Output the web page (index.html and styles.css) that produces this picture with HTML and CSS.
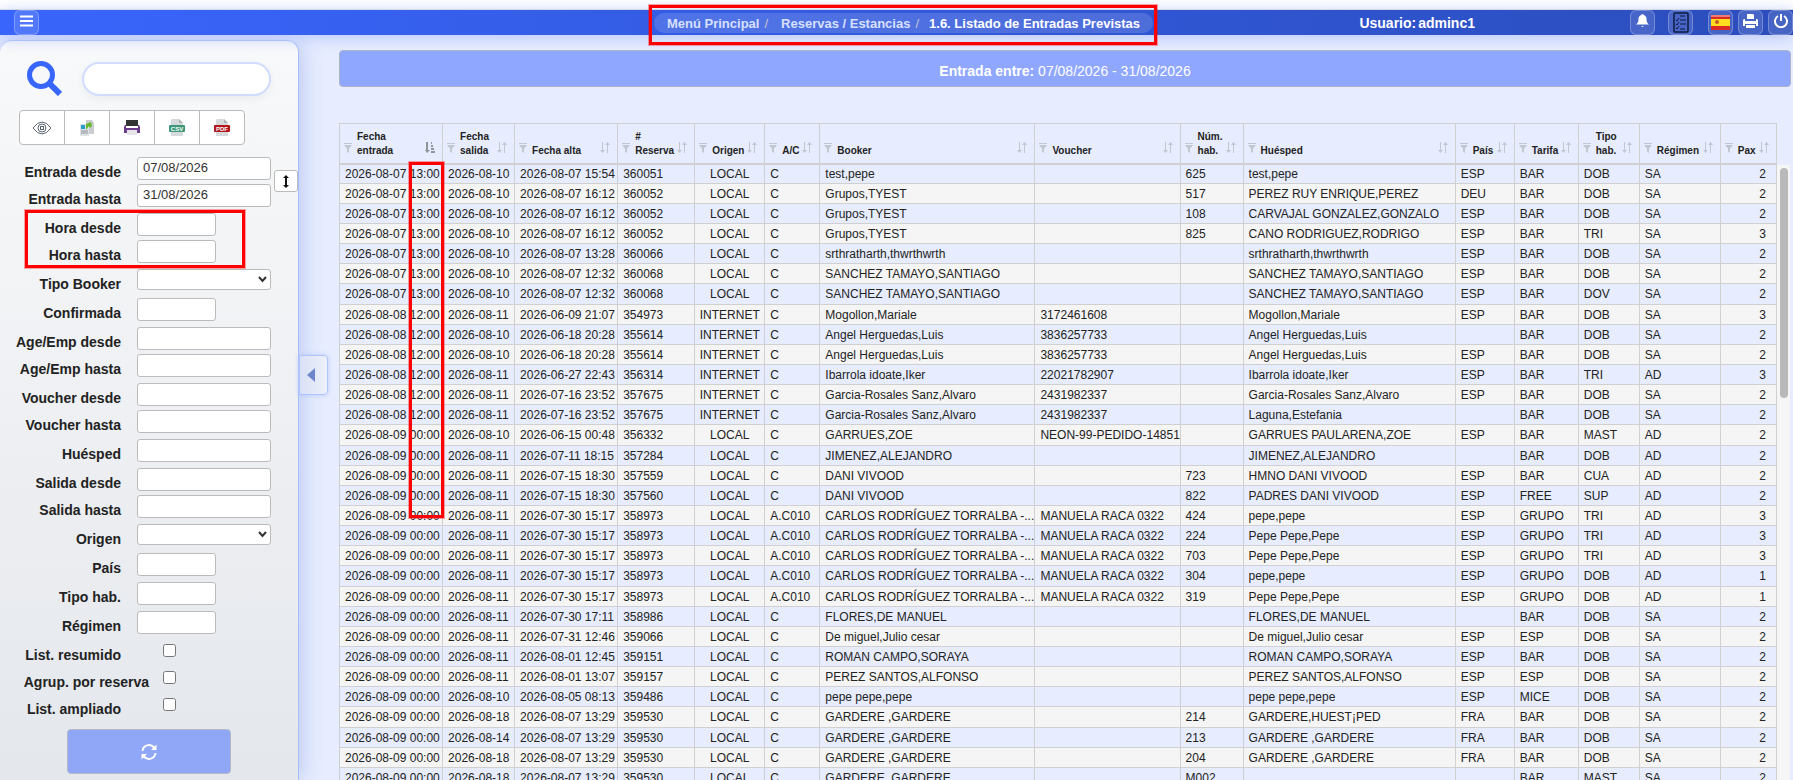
FILE: index.html
```html
<!DOCTYPE html>
<html lang="es">
<head>
    <meta charset="UTF-8">
    <meta name="viewport" content="width=device-width, initial-scale=1.0">
    <title>Listado de Entradas Previstas</title>
    <link rel="stylesheet" href="styles.css">
</head>
<body>
    <!-- Icon shapes shared by the table header -->
    <svg class="hidden">
        <symbol id="filter" viewBox="0 0 8 10"><path d="M0 0h8v1H0zM0 2h8L5 5.500V10L3 8.500v-3z"/></symbol>
        <symbol id="sort" viewBox="0 0 10 11"><path d="M2 0h1v8h2L2.500 11 0 8h2zM7 11h1V3h2L7.500 0 5 3h2z"/></symbol>
        <symbol id="sorted" viewBox="0 0 10 11"><path d="M1 0h2v8h2L2 11 0 8h1zM6 0h1v2H6zM6 3h2v2H6zM6 6h3v2H6zM6 9h4v2H6z"/></symbol>
    </svg>

    <!-- Top bar -->
    <header class="topbar">
        <div>
            <button class="top-button" aria-label="Menú">
                <svg width="13" height="13" viewBox="0 0 13 13"><path d="M0 1.500h13M0 6h13M0 10.500h13" stroke="#fff" stroke-width="2"/></svg>
            </button>
        </div>
        <nav class="breadcrumb">
            <a href="#">Menú Principal</a><span class="slash">/</span>
            <a href="#">Reservas / Estancias</a><span class="slash">/</span>
            <strong>1.6. Listado de Entradas Previstas</strong>
            <span class="mark mark-title"></span>
        </nav>
        <div class="top-right">
            <div class="user"><span>Usuario:</span><span>adminc1</span></div>
            <button class="top-button" aria-label="Avisos">
                <svg width="13" height="14" viewBox="0 0 13 14" fill="#fff"><path d="M5.500 1a1 1 0 0 1 2 0c2 .5 3 2 3 4 0 3 .8 4 2.500 5.500H0C1.700 9 2.500 8 2.500 5c0-2 1-3.500 3-4zM5.500 12h2a1 1 0 0 1-2 0z"/></svg>
            </button>
            <button class="top-button tasks-button" aria-label="Tareas">
                <svg width="16" height="21" viewBox="0 0 16 21" fill="none" stroke="#0f1c3c"><rect x="1" y="1" width="14" height="19" rx="1" stroke-width="1.500"/><path d="M7 4h5M3 8l1 1 2-3M7 8h6M3 12l1 1 2-3M7 12h6M3 16l1 1 2-3M7 17h5"/></svg>
            </button>
            <button class="top-button flag-button" aria-label="Idioma">
                <svg width="19" height="15" viewBox="0 0 19 15"><path fill="#d92b25" d="M0 0h19v15H0z"/><path fill="#ffde20" d="M0 4h19v7H0z"/><path fill="#ef7a70" d="M0 0h19v2H0z"/><circle cx="6" cy="7" r="2" fill="#c35b25"/></svg>
            </button>
            <button class="top-button" aria-label="Imprimir">
                <svg width="15" height="14" viewBox="0 0 15 14" fill="#fff"><path d="M4 0h6l1 1v4H4zM1 5h1v2h11V5h1l1 1v6h-2v-2H2v2H0V6zM3 11h9v3H3z"/></svg>
            </button>
            <button class="top-button" aria-label="Salir">
                <svg width="14" height="14" viewBox="0 0 14 14" fill="none" stroke="#fff" stroke-width="2"><path d="M4 2a6 6 0 1 0 6 0M7 0v7"/></svg>
            </button>
        </div>
    </header>

    <div class="page">
        <!-- Filters -->
        <aside class="sidebar">
            <div class="search">
                <svg width="35" height="35" viewBox="0 0 35 35" fill="none" stroke="#3866fa"><circle cx="14" cy="14" r="11.500" stroke-width="5"/><path d="M22 22l11 11" stroke-width="6"/></svg>
                <input type="text" class="search-input" aria-label="Buscar">
            </div>

            <div class="tools">
                <button aria-label="Ver">
                    <svg width="20" height="14" viewBox="0 0 20 14" fill="none" stroke="#5b6470"><path d="M1 7q9-12 18 0-9 12-18 0z"/><circle cx="10" cy="7" r="4"/><rect x="8.500" y="5.500" width="3" height="3"/></svg>
                </button>
                <button aria-label="Copiar">
                    <svg width="16" height="18" viewBox="0 0 16 18"><path fill="#c9ccd0" d="M7 1h6l2 3v11H7z"/><path fill="#dfe2e5" d="M1 5h9v12H1z"/><path fill="#2b9dc9" d="M2 6h4v4H2z"/><path fill="#69b82e" d="M7 5l5-2 1 4-2 2-1-2-3 4z"/><path stroke="#8d949b" d="M2 12h7M2 14h7"/></svg>
                </button>
                <button aria-label="Imprimir">
                    <svg width="18" height="17" viewBox="0 0 18 17"><path fill="#333" d="M3 1h12v6H3z"/><path fill="#6d3c8c" d="M2 6h1v3h12V6h1l1 2v6H1V8z"/><path fill="#e5e5ea" d="M4 11h10v5H4z"/></svg>
                </button>
                <button aria-label="CSV">
                    <svg width="18" height="18" viewBox="0 0 18 18"><path fill="#d7dadc" d="M4 0h7l4 4v13H3V1z"/><path fill="#aeb3b6" d="M11 0l4 4h-4z"/><rect x="1" y="6" width="16" height="7" rx="1" fill="#3d9877"/><text x="9" y="12" class="file-type">CSV</text></svg>
                </button>
                <button aria-label="PDF">
                    <svg width="18" height="18" viewBox="0 0 18 18"><path fill="#d7dadc" d="M4 0h7l4 4v13H3V1z"/><path fill="#aeb3b6" d="M11 0l4 4h-4z"/><rect x="1" y="6" width="16" height="7" rx="1" fill="#b0161a"/><text x="9" y="12" class="file-type">PDF</text></svg>
                </button>
            </div>

            <form class="filters">
                <div class="group">
                    <div class="field"><label for="entradaDesde">Entrada desde</label><input type="text" id="entradaDesde" value="07/08/2026"></div>
                    <div class="field"><label for="entradaHasta">Entrada hasta</label><input type="text" id="entradaHasta" value="31/08/2026"></div>
                    <button type="button" class="swap" aria-label="Igualar fechas">
                        <svg width="6" height="13" viewBox="0 0 6 13"><path fill="#111" d="M3 0l3 3H4v7h2l-3 3-3-3h2V3H0z"/></svg>
                    </button>
                </div>
                <div class="group">
                    <div class="field"><label for="horaDesde">Hora desde</label><input type="text" id="horaDesde" class="short"></div>
                    <div class="field"><label for="horaHasta">Hora hasta</label><input type="text" id="horaHasta" class="short"></div>
                    <span class="mark mark-hours"></span>
                </div>
                <div class="field"><label for="tipoBooker">Tipo Booker</label>
                    <div class="select"><select id="tipoBooker"><option></option></select><svg width="9" height="7" viewBox="0 0 9 7"><path d="M1 1l3.500 4L8 1"/></svg></div>
                </div>
                <div class="field"><label for="confirmada">Confirmada</label><input type="text" id="confirmada" class="short"></div>
                <div class="group">
                    <div class="field"><label for="ageDesde">Age/Emp desde</label><input type="text" id="ageDesde"></div>
                    <div class="field"><label for="ageHasta">Age/Emp hasta</label><input type="text" id="ageHasta"></div>
                </div>
                <div class="group">
                    <div class="field"><label for="voucherDesde">Voucher desde</label><input type="text" id="voucherDesde"></div>
                    <div class="field"><label for="voucherHasta">Voucher hasta</label><input type="text" id="voucherHasta"></div>
                </div>
                <div class="field"><label for="huesped">Huésped</label><input type="text" id="huesped"></div>
                <div class="group">
                    <div class="field"><label for="salidaDesde">Salida desde</label><input type="text" id="salidaDesde"></div>
                    <div class="field"><label for="salidaHasta">Salida hasta</label><input type="text" id="salidaHasta"></div>
                </div>
                <div class="field"><label for="origen">Origen</label>
                    <div class="select"><select id="origen"><option></option></select><svg width="9" height="7" viewBox="0 0 9 7"><path d="M1 1l3.500 4L8 1"/></svg></div>
                </div>
                <div class="field"><label for="pais">País</label><input type="text" id="pais" class="short"></div>
                <div class="field"><label for="tipoHab">Tipo hab.</label><input type="text" id="tipoHab" class="short"></div>
                <div class="field"><label for="regimen">Régimen</label><input type="text" id="regimen" class="short"></div>
                <div class="group checks">
                    <div class="field"><label for="resumido">List. resumido</label><input type="checkbox" id="resumido"></div>
                    <div class="field"><label for="agrupado" class="wide">Agrup. por reserva</label><input type="checkbox" id="agrupado"></div>
                    <div class="field"><label for="ampliado">List. ampliado</label><input type="checkbox" id="ampliado"></div>
                </div>
                <button type="button" class="refresh" aria-label="Actualizar">
                    <svg width="16" height="16" viewBox="0 0 16 16" fill="none" stroke="#fff" stroke-width="2"><path d="M1.500 7A6.500 6.500 0 0 1 13 3.500M14.500 9A6.500 6.500 0 0 1 3 12.500"/><path fill="#fff" stroke="none" d="M15.500.5V6H10zM.5 15.500V10H6z"/></svg>
                </button>
            </form>

            <button class="collapse" aria-label="Ocultar filtros">
                <svg width="8" height="14" viewBox="0 0 8 14"><path fill="#6f86cc" d="M8 0v14L0 7z"/></svg>
            </button>
        </aside>

        <!-- Listing -->
        <main class="content">
            <div class="banner"><strong>Entrada entre:</strong> 07/08/2026 - 31/08/2026</div>
            <div class="grid">
                <table class="listing">
                    <colgroup id="cols"></colgroup>
                    <thead><tr id="head"></tr></thead>
                    <tbody id="rows"></tbody>
                </table>
                <div class="scrollbar"><div class="thumb"></div></div>
                <span class="mark mark-column"></span>
            </div>
        </main>
    </div>

    <script src="listado.js"></script>
</body>
</html>
```
FILE: styles.css
```css
* {
    box-sizing: border-box;
}
body {
    margin: 0;
    padding-top: 9px;
    height: 100vh;
    display: flex;
    flex-direction: column;
    overflow: hidden;
    background: #fff;
    color: #222;
    font-family: "Liberation Sans", Arial, sans-serif;
    font-size: 13px;
}
button {
    padding: 0;
    display: flex;
    align-items: center;
    justify-content: center;
    cursor: pointer;
}
input, select {
    font-family: inherit;
}
.hidden {
    display: none;
}

/* Red highlight boxes */
.mark {
    position: absolute;
    border: 3px solid #fe0000;
    box-shadow: 0 0 0 1px rgba(254, 0, 0, 0.35);
    pointer-events: none;
    z-index: 5;
}
.mark-title {
    inset: -8px -4px -12px -5px;
}
.mark-hours {
    top: -3px;
    left: 25px;
    width: 220px;
    bottom: -5px;
}
.mark-column {
    top: 39px;
    left: 70px;
    width: 35px;
    height: 356px;
}

/* Top bar */
.topbar {
    position: relative;
    z-index: 2;
    display: grid;
    grid-template-columns: 1fr auto 1fr;
    align-items: center;
    height: 26px;
    flex: none;
    padding-left: 14px;
    border-top: 1px solid #d5d9e4;
    background: linear-gradient(90deg, #3965fc, #2b4dbc);
    box-shadow: 0 3px 15px #b9c8fa;
    color: #fff;
}
.top-button {
    width: 25px;
    height: 25px;
    padding-bottom: 3px;
    border: 1px solid rgba(255, 255, 255, 0.25);
    border-radius: 6px;
    background: rgba(255, 255, 255, 0.13);
}
.breadcrumb {
    position: relative;
    display: flex;
    align-items: center;
    height: 20px;
    padding: 2px 13px 0;
    border-radius: 10px;
    background: rgba(255, 255, 255, 0.14);
    font-weight: bold;
    white-space: nowrap;
}
.breadcrumb a {
    color: #d7e0ff;
    text-decoration: none;
}
.slash {
    margin: 0 13px 0 5px;
    color: #c5c9cf;
    font-weight: normal;
}
.slash + strong {
    margin-left: -3px;
}
.top-right {
    display: flex;
    align-items: center;
    justify-content: flex-end;
    gap: 5px;
}
.user {
    display: flex;
    gap: 2px;
    margin-right: 150px;
    font-size: 14px;
    font-weight: bold;
}
.tasks-button {
    margin: 0 10px 0 8px;
    padding-bottom: 0;
}
.flag-button {
    padding-bottom: 0;
}

.page {
    flex: 1;
    min-height: 0;
    display: flex;
    background: #e7edfe;
}

/* Sidebar */
.sidebar {
    position: relative;
    flex: none;
    width: 299px;
    margin-top: 5px;
    border: 1px solid #a5bcfd;
    border-left: 0;
    border-bottom: 0;
    border-radius: 12px 12px 0 0;
    background: linear-gradient(#f8f9fa, #e4e7ec);
    box-shadow: 2px 0 22px #b6c5f4;
}
.search {
    display: flex;
    align-items: center;
    gap: 20px;
    padding: 20px 0 0 27px;
}
.search-input {
    width: 189px;
    height: 34px;
    padding: 0 14px;
    border: 2px solid #d1dcff;
    border-radius: 17px;
    background: #fff;
    box-shadow: 0 3px 8px rgba(0, 0, 0, 0.05);
}
.tools {
    display: flex;
    width: 226px;
    margin: 14px 0 0 19px;
    border: 1px solid #bbb;
    border-radius: 4px;
    background: #fff;
}
.tools button {
    flex: 1;
    height: 33px;
    border: 0;
    background: none;
}
.tools button + button {
    border-left: 1px solid #bbb;
}
.file-type {
    fill: #fff;
    font-size: 6px;
    font-weight: bold;
    text-anchor: middle;
}
.filters {
    display: flex;
    flex-direction: column;
    gap: 6px;
    margin-top: 12px;
}
.group {
    position: relative;
    display: flex;
    flex-direction: column;
    gap: 4px;
}
.field {
    display: flex;
    gap: 16px;
    height: 23px;
}
.field label {
    width: 121px;
    padding-top: 7px;
    font-size: 14px;
    font-weight: bold;
    line-height: 16px;
    text-align: right;
    white-space: nowrap;
}
.field input[type="text"] {
    width: 134px;
    height: 23px;
    padding: 0 5px 2px;
    border: 1px solid #bbb;
    border-radius: 3px;
    background: #fff;
    color: #333;
    font-size: 13px;
}
.field input.short {
    width: 79px;
}
.select {
    position: relative;
    width: 134px;
}
.select select {
    width: 100%;
    height: 21px;
    border: 1px solid #bbb;
    border-radius: 3px;
    background: #fff;
    appearance: none;
}
.select svg {
    position: absolute;
    top: 7px;
    right: 4px;
    fill: none;
    stroke: #333;
    stroke-width: 2;
    pointer-events: none;
}
.checks .field {
    gap: 42px;
}
.checks .field input {
    width: 13px;
    height: 13px;
    margin: 4px 0;
}
.checks .field label.wide {
    width: 149px;
    margin-right: -28px;
}
.swap {
    position: absolute;
    top: 13px;
    right: 0;
    width: 24px;
    height: 22px;
    border: 1px solid #bbb;
    border-radius: 3px;
    background: #fff;
}
.refresh {
    width: 164px;
    height: 45px;
    margin: 6px 0 0 67px;
    border: 1px solid #b4b9c8;
    border-radius: 4px;
    background: #8fa7f6;
}
.collapse {
    position: absolute;
    top: 314px;
    right: -30px;
    width: 29px;
    height: 40px;
    padding-right: 5px;
    border: 1px solid #afc4fe;
    border-radius: 0 4px 4px 0;
    background: linear-gradient(90deg, #d9e0f6, #eef1fb);
    box-shadow: 0 0 5px #b9c8f8;
}

/* Listing */
.content {
    flex: 1;
    min-width: 0;
    padding: 15px 2px 0 40px;
}
.banner {
    height: 37px;
    border: 1px solid #abb2c9;
    border-radius: 4px;
    background: #8fa7ff;
    color: #fff;
    font-size: 14px;
    line-height: 41px;
    text-align: center;
}
.grid {
    position: relative;
    display: flex;
    margin: 36px 1px 0 0;
}
.listing {
    flex: 1;
    width: 100%;
    min-width: 0;
    table-layout: fixed;
    border-collapse: collapse;
}
.listing th, .listing td {
    border: 1px solid #d0d0d0;
    overflow: hidden;
    white-space: nowrap;
}
.listing th {
    height: 40px;
    padding: 0;
    border-bottom-width: 2px;
    vertical-align: bottom;
}
.heading {
    display: flex;
    align-items: flex-end;
    gap: 5px;
    padding: 0 7px 5px 4px;
    font-size: 10px;
    line-height: 14px;
    text-align: left;
}
.heading svg {
    flex: none;
    margin-bottom: 5px;
    fill: #c1c6d1;
}
.heading .order {
    margin-left: auto;
}
.heading .active {
    fill: #8f949d;
}
.heading span {
    margin-right: -4px;
}
.listing td {
    height: 20px;
    padding: 0 0 0 5px;
    font-size: 12px;
    line-height: 14px;
}
.listing tr:nth-child(7n) td {
    height: 21px;
}
.listing tbody tr:nth-child(even) {
    background: #f5f5f5;
}
.listing td:nth-child(5) {
    padding-left: 0;
    text-align: center;
}
.listing td:last-child {
    padding-right: 10px;
    text-align: right;
}
.scrollbar {
    flex: none;
    width: 13px;
    margin-top: 42px;
    padding: 3px 2px 0 3px;
    background: #f6f6f6;
}
.thumb {
    height: 230px;
    border-radius: 4px;
    background: #b9b9b9;
}
```
FILE: listado.js
```js
const columns = [
    ["Fecha<br>entrada", 103], ["Fecha<br>salida", 72], ["Fecha alta", 103], ["#<br>Reserva", 77],
    ["Origen", 70], ["A/C", 55], ["Booker", 215], ["Voucher", 145], ["Núm.<br>hab.", 63],
    ["Huésped", 212], ["País", 59], ["Tarifa", 64], ["Tipo<br>hab.", 61], ["Régimen", 81], ["Pax", 56]
];

const data = `
2026-08-07 13:00|2026-08-10|2026-08-07 15:54|360051|LOCAL|C|test,pepe||625|test,pepe|ESP|BAR|DOB|SA|2
2026-08-07 13:00|2026-08-10|2026-08-07 16:12|360052|LOCAL|C|Grupos,TYEST||517|PEREZ RUY ENRIQUE,PEREZ|DEU|BAR|DOB|SA|2
2026-08-07 13:00|2026-08-10|2026-08-07 16:12|360052|LOCAL|C|Grupos,TYEST||108|CARVAJAL GONZALEZ,GONZALO|ESP|BAR|DOB|SA|2
2026-08-07 13:00|2026-08-10|2026-08-07 16:12|360052|LOCAL|C|Grupos,TYEST||825|CANO RODRIGUEZ,RODRIGO|ESP|BAR|TRI|SA|3
2026-08-07 13:00|2026-08-10|2026-08-07 13:28|360066|LOCAL|C|srthratharth,thwrthwrth|||srthratharth,thwrthwrth|ESP|BAR|DOB|SA|2
2026-08-07 13:00|2026-08-10|2026-08-07 12:32|360068|LOCAL|C|SANCHEZ TAMAYO,SANTIAGO|||SANCHEZ TAMAYO,SANTIAGO|ESP|BAR|DOB|SA|2
2026-08-07 13:00|2026-08-10|2026-08-07 12:32|360068|LOCAL|C|SANCHEZ TAMAYO,SANTIAGO|||SANCHEZ TAMAYO,SANTIAGO|ESP|BAR|DOV|SA|2
2026-08-08 12:00|2026-08-11|2026-06-09 21:07|354973|INTERNET|C|Mogollon,Mariale|3172461608||Mogollon,Mariale|ESP|BAR|DOB|SA|3
2026-08-08 12:00|2026-08-10|2026-06-18 20:28|355614|INTERNET|C|Angel Herguedas,Luis|3836257733||Angel Herguedas,Luis||BAR|DOB|SA|2
2026-08-08 12:00|2026-08-10|2026-06-18 20:28|355614|INTERNET|C|Angel Herguedas,Luis|3836257733||Angel Herguedas,Luis|ESP|BAR|DOB|SA|2
2026-08-08 12:00|2026-08-11|2026-06-27 22:43|356314|INTERNET|C|Ibarrola idoate,Iker|22021782907||Ibarrola idoate,Iker|ESP|BAR|TRI|AD|3
2026-08-08 12:00|2026-08-11|2026-07-16 23:52|357675|INTERNET|C|Garcia-Rosales Sanz,Alvaro|2431982337||Garcia-Rosales Sanz,Alvaro|ESP|BAR|DOB|SA|2
2026-08-08 12:00|2026-08-11|2026-07-16 23:52|357675|INTERNET|C|Garcia-Rosales Sanz,Alvaro|2431982337||Laguna,Estefania||BAR|DOB|SA|2
2026-08-09 00:00|2026-08-10|2026-06-15 00:48|356332|LOCAL|C|GARRUES,ZOE|NEON-99-PEDIDO-14851||GARRUES PAULARENA,ZOE|ESP|BAR|MAST|AD|2
2026-08-09 00:00|2026-08-11|2026-07-11 18:15|357284|LOCAL|C|JIMENEZ,ALEJANDRO|||JIMENEZ,ALEJANDRO||BAR|DOB|AD|2
2026-08-09 00:00|2026-08-11|2026-07-15 18:30|357559|LOCAL|C|DANI VIVOOD||723|HMNO DANI VIVOOD|ESP|BAR|CUA|AD|2
2026-08-09 00:00|2026-08-11|2026-07-15 18:30|357560|LOCAL|C|DANI VIVOOD||822|PADRES DANI VIVOOD|ESP|FREE|SUP|AD|2
2026-08-09 00:00|2026-08-11|2026-07-30 15:17|358973|LOCAL|A.C010|CARLOS RODRÍGUEZ TORRALBA -...|MANUELA RACA 0322|424|pepe,pepe|ESP|GRUPO|TRI|AD|3
2026-08-09 00:00|2026-08-11|2026-07-30 15:17|358973|LOCAL|A.C010|CARLOS RODRÍGUEZ TORRALBA -...|MANUELA RACA 0322|224|Pepe Pepe,Pepe|ESP|GRUPO|TRI|AD|3
2026-08-09 00:00|2026-08-11|2026-07-30 15:17|358973|LOCAL|A.C010|CARLOS RODRÍGUEZ TORRALBA -...|MANUELA RACA 0322|703|Pepe Pepe,Pepe|ESP|GRUPO|TRI|AD|3
2026-08-09 00:00|2026-08-11|2026-07-30 15:17|358973|LOCAL|A.C010|CARLOS RODRÍGUEZ TORRALBA -...|MANUELA RACA 0322|304|pepe,pepe|ESP|GRUPO|DOB|AD|1
2026-08-09 00:00|2026-08-11|2026-07-30 15:17|358973|LOCAL|A.C010|CARLOS RODRÍGUEZ TORRALBA -...|MANUELA RACA 0322|319|Pepe Pepe,Pepe|ESP|GRUPO|DOB|AD|1
2026-08-09 00:00|2026-08-11|2026-07-30 17:11|358986|LOCAL|C|FLORES,DE MANUEL|||FLORES,DE MANUEL||BAR|DOB|SA|2
2026-08-09 00:00|2026-08-11|2026-07-31 12:46|359066|LOCAL|C|De miguel,Julio cesar|||De miguel,Julio cesar|ESP|ESP|DOB|SA|2
2026-08-09 00:00|2026-08-11|2026-08-01 12:45|359151|LOCAL|C|ROMAN CAMPO,SORAYA|||ROMAN CAMPO,SORAYA|ESP|BAR|DOB|SA|2
2026-08-09 00:00|2026-08-11|2026-08-01 13:07|359157|LOCAL|C|PEREZ SANTOS,ALFONSO|||PEREZ SANTOS,ALFONSO|ESP|ESP|DOB|SA|2
2026-08-09 00:00|2026-08-10|2026-08-05 08:13|359486|LOCAL|C|pepe pepe,pepe|||pepe pepe,pepe|ESP|MICE|DOB|SA|2
2026-08-09 00:00|2026-08-18|2026-08-07 13:29|359530|LOCAL|C|GARDERE ,GARDERE||214|GARDERE,HUEST¡PED|FRA|BAR|DOB|SA|2
2026-08-09 00:00|2026-08-14|2026-08-07 13:29|359530|LOCAL|C|GARDERE ,GARDERE||213|GARDERE ,GARDERE|FRA|BAR|DOB|SA|2
2026-08-09 00:00|2026-08-18|2026-08-07 13:29|359530|LOCAL|C|GARDERE ,GARDERE||204|GARDERE ,GARDERE|FRA|BAR|DOB|SA|2
2026-08-09 00:00|2026-08-18|2026-08-07 13:29|359530|LOCAL|C|GARDERE ,GARDERE||M002|||BAR|MAST|SA|2
`;

document.getElementById("cols").innerHTML = columns
    .map(([, width]) => `<col style="width: ${width}px">`)
    .join("");

// The list comes sorted by the first column
document.getElementById("head").innerHTML = columns
    .map(([title], i) => `<th><div class="heading">
        <svg width="8" height="10"><use href="#filter"/></svg>
        <span>${title}</span>
        <svg class="order ${i === 0 ? "active" : ""}" width="10" height="11"><use href="#${i === 0 ? "sorted" : "sort"}"/></svg>
    </div></th>`)
    .join("");

document.getElementById("rows").innerHTML = data.trim().split("\n")
    .map(line => `<tr>${line.split("|").map(cell => `<td>${cell}</td>`).join("")}</tr>`)
    .join("");
```
